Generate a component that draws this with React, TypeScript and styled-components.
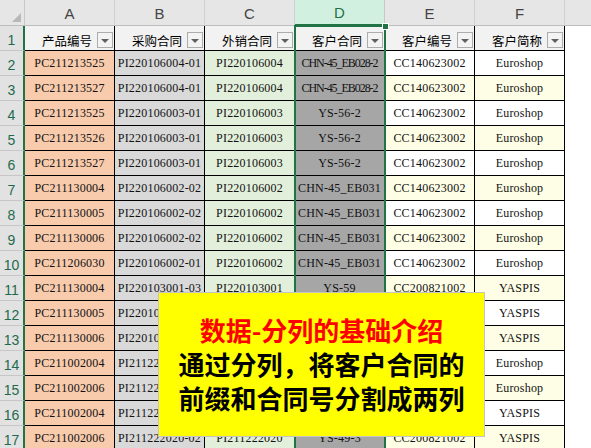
import React from "react";
import styled, { createGlobalStyle } from "styled-components";

const GlobalStyle = createGlobalStyle`
  html, body { margin: 0; padding: 0; background: #fff; overflow: hidden; }
  #root { width: 591px; height: 448px; }
`;

const GREEN = "#217346";

const Sheet = styled.div`
  position: relative;
  width: 591px;
  height: 448px;
  overflow: hidden;
  display: grid;
  grid-template-columns: 25px repeat(6, 90px) 1fr;
  grid-template-rows: 26px;
  grid-auto-rows: 25px;
  background: #fff;
`;

const Corner = styled.div`
  position: relative;
  box-sizing: border-box;
  background: #e6e6e6;
  border-right: 1px solid #c8c8c8;
  border-bottom: 1px solid #bdbdbd;
  &::after {
    content: "";
    position: absolute;
    right: 3px;
    bottom: 3px;
    width: 0;
    height: 0;
    border-left: 9px solid transparent;
    border-bottom: 9px solid #b8b8b8;
  }
`;

const ColLetter = styled.div<{ $active?: boolean }>`
  box-sizing: border-box;
  display: flex;
  align-items: center;
  justify-content: center;
  background: ${(p) => (p.$active ? "#d2f0e0" : "#e6e6e6")};
  color: ${(p) => (p.$active ? GREEN : "#444")};
  border-right: 1px solid ${(p) => (p.$active ? "#c8c8c8" : "#d0d0d0")};
  border-bottom: ${(p) => (p.$active ? `2px solid ${GREEN}` : "1px solid #bdbdbd")};
  font-family: "Liberation Sans", Arial, sans-serif;
  font-size: 15px;
  padding-top: 1px;
`;

const RowNum = styled.div`
  box-sizing: border-box;
  display: flex;
  align-items: center;
  justify-content: center;
  background: #e2e2e2;
  color: #1d6b4c;
  border-right: 2px solid ${GREEN};
  border-bottom: 1px solid #c6c6c6;
  font-family: "Liberation Sans", Arial, sans-serif;
  font-size: 14px;
  padding-top: 3px;
`;

const HeadCell = styled.div`
  box-sizing: border-box;
  display: flex;
  align-items: center;
  justify-content: flex-end;
  gap: 5px;
  padding: 4px 1px 0 0;
  background: #f2f2f2;
  border-right: 1px solid #000;
  border-bottom: 1px solid #000;
  font-family: "Noto Sans CJK SC", sans-serif;
  font-size: 12.5px;
  color: #000;
  white-space: nowrap;
`;

const FilterButton = styled.span`
  box-sizing: border-box;
  width: 16px;
  height: 16px;
  display: flex;
  align-items: center;
  justify-content: center;
  background: #f3f3f3;
  border: 1px solid #adadad;
  &::after {
    content: "";
    width: 0;
    height: 0;
    border-left: 4px solid transparent;
    border-right: 4px solid transparent;
    border-top: 4px solid #606060;
    margin-top: 1px;
  }
`;

const DataCell = styled.div<{ $bg: string; $condensed?: boolean }>`
  box-sizing: border-box;
  display: flex;
  align-items: center;
  justify-content: center;
  padding-top: 1px;
  background: ${(p) => p.$bg};
  border-right: 1px solid #000;
  border-bottom: 1px solid #000;
  font-family: "Liberation Serif", "Times New Roman", serif;
  font-size: 12px;
  letter-spacing: ${(p) => (p.$condensed ? "-1.05px" : "0.2px")};
  color: #111;
  white-space: nowrap;
  overflow: hidden;
`;

const Blank = styled.div<{ $head?: boolean }>`
  background: ${(p) => (p.$head ? "#e6e6e6" : "#fff")};
  border-bottom: ${(p) => (p.$head ? "1px solid #bdbdbd" : "none")};
  box-sizing: border-box;
`;

const Selection = styled.div`
  position: absolute;
  left: 294px;
  top: 25px;
  width: 92px;
  height: 430px;
  box-sizing: border-box;
  border: 2px solid ${GREEN};
  pointer-events: none;
`;

const FillHandle = styled.div`
  position: absolute;
  left: 382px;
  top: 23px;
  width: 5px;
  height: 5px;
  background: ${GREEN};
  border: 1px solid #fff;
`;

const Callout = styled.div`
  position: absolute;
  left: 158px;
  top: 292px;
  width: 327px;
  height: 145px;
  box-sizing: border-box;
  background: #ffff00;
  border: 1px solid #c4c4c4;
  display: flex;
  flex-direction: column;
  align-items: center;
  padding-top: 20px;
  font-family: "Noto Sans CJK SC", sans-serif;
  font-weight: 700;
  font-size: 26px;
  line-height: 34px;
`;

const CalloutLine = styled.div<{ $red?: boolean }>`
  color: ${(p) => (p.$red ? "#ff0000" : "#000")};
  white-space: nowrap;
`;

const headers = ["产品编号", "采购合同", "外销合同", "客户合同", "客户编号", "客户简称"];

const rows: string[][] = [
  ["PC211213525", "PI220106004-01", "PI220106004", "CHN-45_EB028-2", "CC140623002", "Euroshop"],
  ["PC211213527", "PI220106004-01", "PI220106004", "CHN-45_EB028-2", "CC140623002", "Euroshop"],
  ["PC211213525", "PI220106003-01", "PI220106003", "YS-56-2", "CC140623002", "Euroshop"],
  ["PC211213526", "PI220106003-01", "PI220106003", "YS-56-2", "CC140623002", "Euroshop"],
  ["PC211213527", "PI220106003-01", "PI220106003", "YS-56-2", "CC140623002", "Euroshop"],
  ["PC211130004", "PI220106002-02", "PI220106002", "CHN-45_EB031", "CC140623002", "Euroshop"],
  ["PC211130005", "PI220106002-02", "PI220106002", "CHN-45_EB031", "CC140623002", "Euroshop"],
  ["PC211130006", "PI220106002-02", "PI220106002", "CHN-45_EB031", "CC140623002", "Euroshop"],
  ["PC211206030", "PI220106002-01", "PI220106002", "CHN-45_EB031", "CC140623002", "Euroshop"],
  ["PC211130004", "PI220103001-03", "PI220103001", "YS-59", "CC200821002", "YASPIS"],
  ["PC211130005", "PI220103001-03", "PI220103001", "YS-59", "CC200821002", "YASPIS"],
  ["PC211130006", "PI220103001-03", "PI220103001", "YS-59", "CC200821002", "YASPIS"],
  ["PC211002004", "PI211222020-01", "PI211222020", "CHN-45_EB031", "CC140623002", "Euroshop"],
  ["PC211002006", "PI211222020-01", "PI211222020", "CHN-45_EB031", "CC140623002", "Euroshop"],
  ["PC211002004", "PI211222020-02", "PI211222020", "YS-49-3", "CC200821002", "YASPIS"],
  ["PC211002006", "PI211222020-02", "PI211222020", "YS-49-3", "CC200821002", "YASPIS"],
];

const colBg = (col: number, rowNum: number): string => {
  switch (col) {
    case 0:
      return "#f8cbad";
    case 1:
      return "#d9d9d9";
    case 2:
      return "#e2efda";
    case 3:
      return "#a6a6a6";
    default:
      return rowNum % 2 === 1 ? "#fefee6" : "#ffffff";
  }
};

export default function App() {
  const letters = ["A", "B", "C", "D", "E", "F"];
  return (
    <>
      <GlobalStyle />
      <Sheet>
        <Corner />
        {letters.map((l) => (
          <ColLetter key={l} $active={l === "D"}>
            {l}
          </ColLetter>
        ))}
        <Blank $head />

        <RowNum>1</RowNum>
        {headers.map((h) => (
          <HeadCell key={h}>
            {h}
            <FilterButton />
          </HeadCell>
        ))}
        <Blank />

        {rows.map((r, i) => {
          const rowNum = i + 2;
          return (
            <React.Fragment key={rowNum}>
              <RowNum>{rowNum}</RowNum>
              {r.map((v, c) => (
                <DataCell key={c} $bg={colBg(c, rowNum)} $condensed={v.length > 13 && c === 3}>
                  {v}
                </DataCell>
              ))}
              <Blank />
            </React.Fragment>
          );
        })}

        <Selection />
        <FillHandle />

        <Callout>
          <CalloutLine $red>数据-分列的基础介绍</CalloutLine>
          <CalloutLine>通过分列，将客户合同的</CalloutLine>
          <CalloutLine>前缀和合同号分割成两列</CalloutLine>
        </Callout>
      </Sheet>
    </>
  );
}
